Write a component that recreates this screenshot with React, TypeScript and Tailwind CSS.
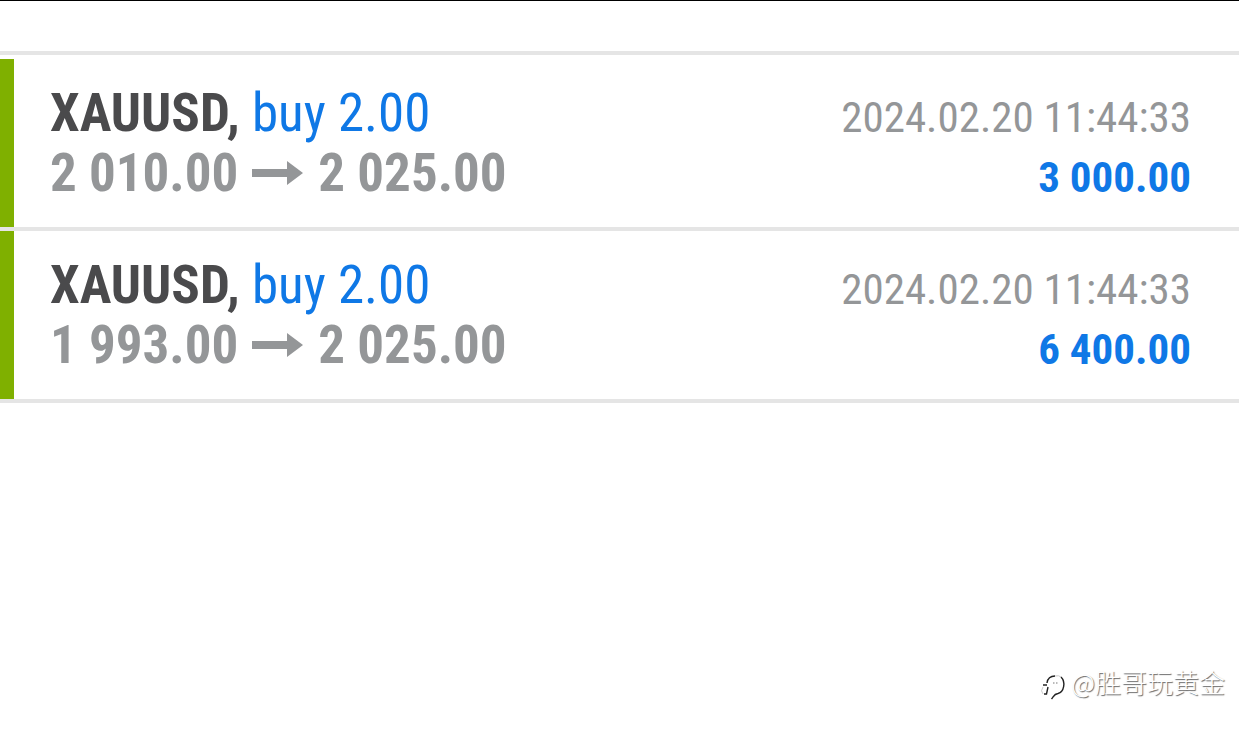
const deals = [
  { id: 1, symbol: "XAUUSD,", side: "buy 2.00", from: "2 010.00", to: "2 025.00", time: "2024.02.20 11:44:33", profit: "3 000.00" },
  { id: 2, symbol: "XAUUSD,", side: "buy 2.00", from: "1 993.00", to: "2 025.00", time: "2024.02.20 11:44:33", profit: "6 400.00" },
];

function Arrow() {
  return (
    <svg className="h-6 w-[52px] shrink-0" viewBox="0 0 52 24" fill="currentColor" role="img" aria-label="to">
      <path d="M0 8h35V0l16 12-16 12v-8H0z" />
    </svg>
  );
}

function WatermarkLogo() {
  return (
    <svg className="h-10 w-7" viewBox="0 -8 28 40" fill="none" aria-hidden="true">
      <g stroke="#222" strokeWidth="1.4">
        <path d="M8 13Q9 6 16 6" />
        <path d="M4 15h4M9 17 7.500 24H5" />
        <path d="M22 7C27 12 25 22 19 23.500C15 24 15 26 12.500 29" />
      </g>
      <path d="M14 13h1.500M17 13h1.500" stroke="#777" />
      <path d="M4 17Q1 21 4 24M16 6Q20 5 22 7" stroke="#ccc" />
    </svg>
  );
}

export default function App() {
  return (
    <main className="flex min-h-screen flex-col border-t border-black bg-white font-['Roboto_Condensed','Roboto',sans-serif]">
      <div className="h-[54px] border-b-4 border-[#e5e5e5]" />
      <ul className="pt-1">
        {deals.map((d) => (
          <li key={d.id} className="flex border-b-4 border-[#e5e5e5]">
            <div className="w-[14px] bg-[#7fb000]" />
            <div className="flex flex-1 justify-between pt-6 pr-12 pb-5 pl-9">
              <div className="text-[53px] leading-[60px]">
                <p><span className="font-bold text-[#4a4a4c]">{d.symbol}</span> <span className="text-[#0f78e6]">{d.side}</span></p>
                <p className="flex items-center gap-[14px] font-bold text-[#949698]">{d.from}<Arrow />{d.to}</p>
              </div>
              <div className="pt-1 text-right text-[43px] leading-[60px]">
                <p className="text-[#949698]">{d.time}</p>
                <p className="font-bold text-[#0f78e6]">{d.profit}</p>
              </div>
            </div>
          </li>
        ))}
      </ul>
      <footer className="mt-auto flex items-center justify-end gap-1 pr-[14px] pb-[27px] font-['Noto_Sans_CJK_SC',sans-serif] text-[26px] leading-10 font-light text-white [text-shadow:1px_1px_1px_#666]">
        <WatermarkLogo />
        <span>@胜哥玩黄金</span>
      </footer>
    </main>
  );
}
